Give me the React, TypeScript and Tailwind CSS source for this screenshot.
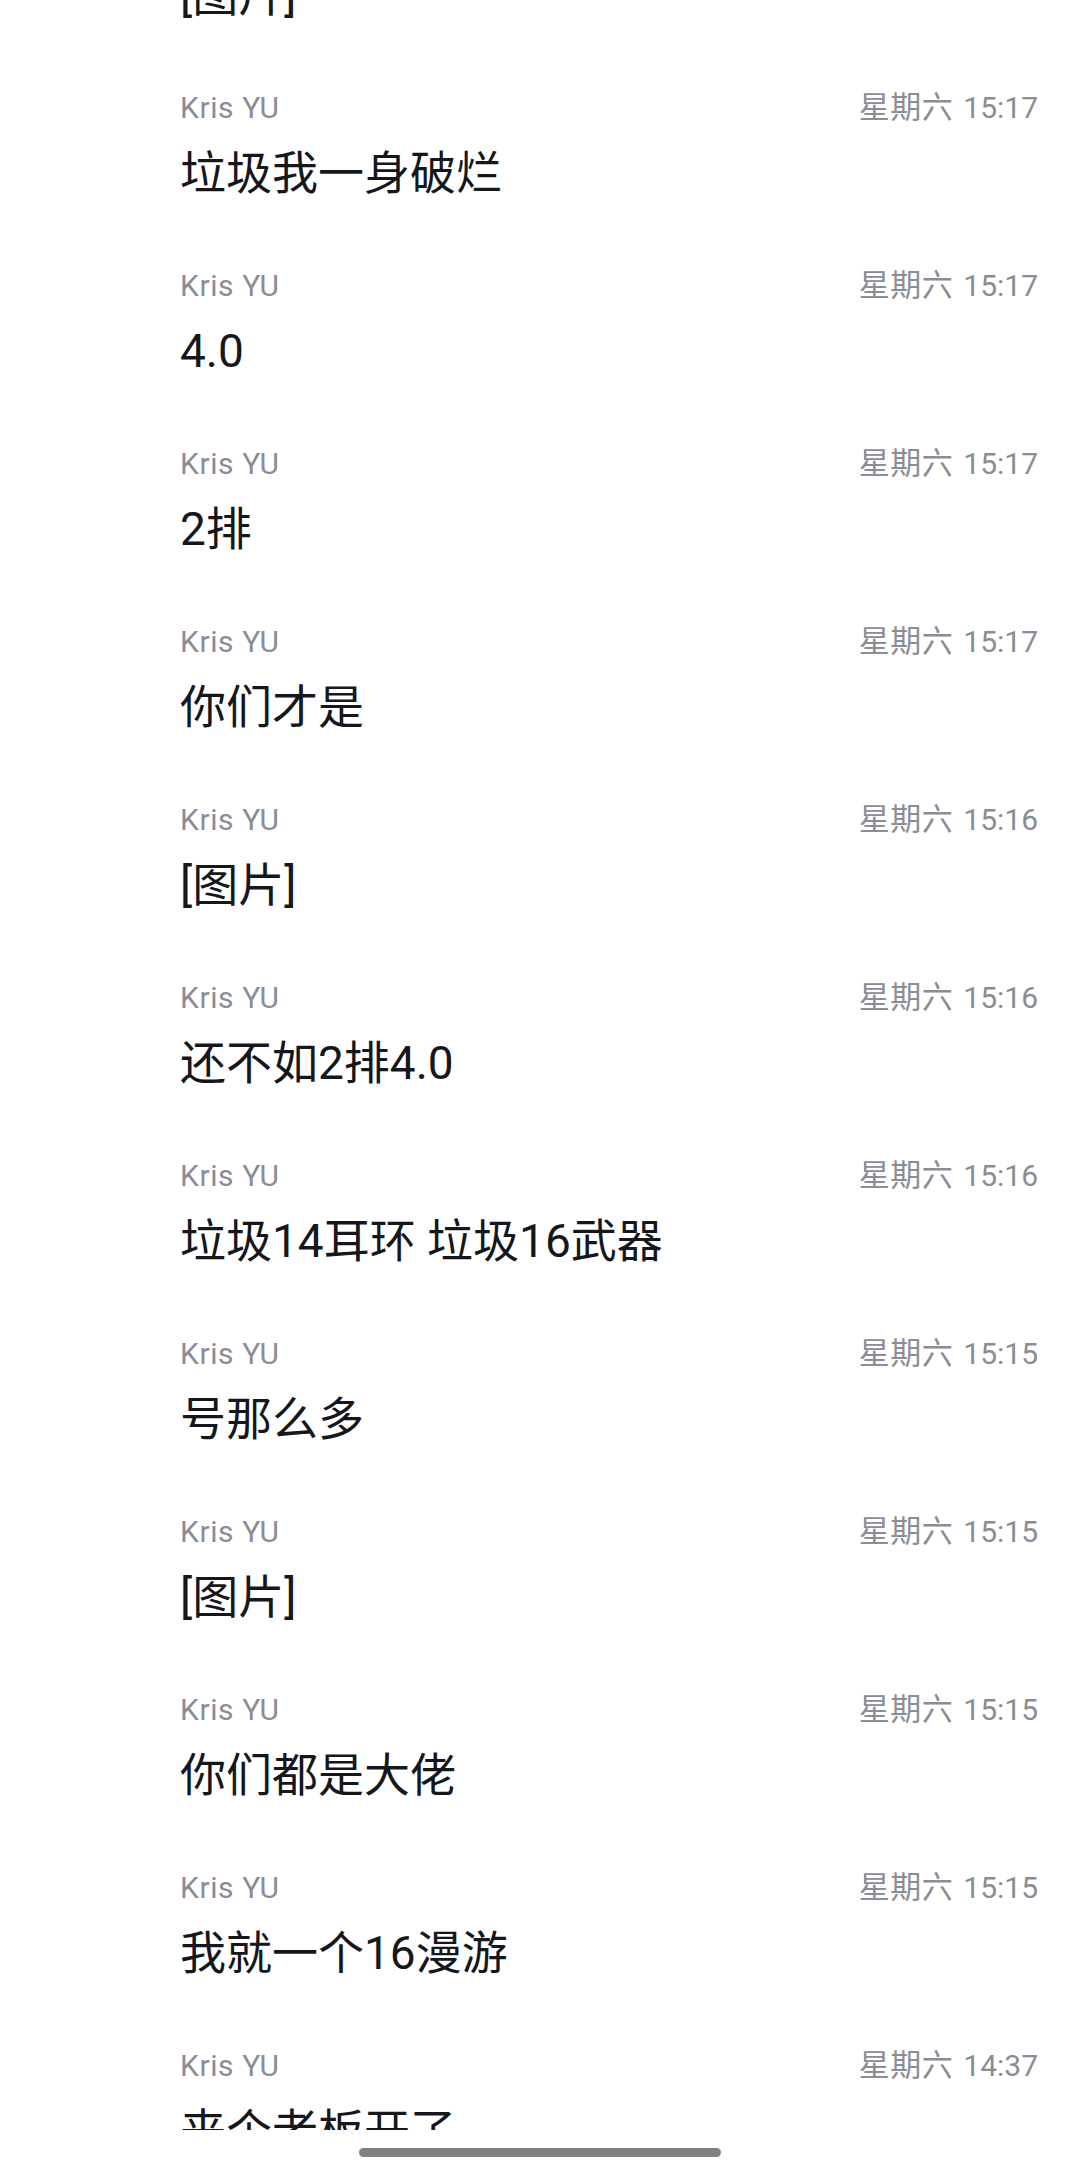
import React from 'react';

type Message = {
  id: number;
  day: string;
  clock: string;
  text: string;
};

const messages: Message[] = [
  { id: 0, day: '星期六', clock: '15:17', text: '[图片]' },
  { id: 1, day: '星期六', clock: '15:17', text: '垃圾我一身破烂' },
  { id: 2, day: '星期六', clock: '15:17', text: '4.0' },
  { id: 3, day: '星期六', clock: '15:17', text: '2排' },
  { id: 4, day: '星期六', clock: '15:17', text: '你们才是' },
  { id: 5, day: '星期六', clock: '15:16', text: '[图片]' },
  { id: 6, day: '星期六', clock: '15:16', text: '还不如2排4.0' },
  { id: 7, day: '星期六', clock: '15:16', text: '垃圾14耳环 垃圾16武器' },
  { id: 8, day: '星期六', clock: '15:15', text: '号那么多' },
  { id: 9, day: '星期六', clock: '15:15', text: '[图片]' },
  { id: 10, day: '星期六', clock: '15:15', text: '你们都是大佬' },
  { id: 11, day: '星期六', clock: '15:15', text: '我就一个16漫游' },
  { id: 12, day: '星期六', clock: '14:37', text: '来个老板开了' },
];

const MessageRow: React.FC<{ message: Message }> = ({ message }) => (
  <div className="flex flex-col h-[178px] pt-[40px] pl-[180px] pr-[42px] shrink-0">
    <div className="flex items-center justify-between text-[30px] leading-[40px] text-[#8a8d95]">
      <span className="tracking-[0.6px]">Kris YU</span>
      <span className="flex items-baseline">
        <span className="text-[31px] tracking-[0.5px]">{message.day}</span>
        <span className="ml-[10px]">{message.clock}</span>
      </span>
    </div>
    <div className="mt-[17px] text-[46px] leading-[56px] text-[#15171c] whitespace-nowrap">
      {message.text}
    </div>
  </div>
);

export default function App() {
  return (
    <div
      className="w-[1080px] h-[2178px] bg-white flex flex-col overflow-hidden"
      style={{ fontFamily: 'Roboto, "Noto Sans CJK SC", sans-serif' }}
    >
      {/* Search results */}
      <div className="h-[2130px] overflow-hidden shrink-0">
        <div className="flex flex-col -mt-[130px]">
          {messages.map(m => (
            <MessageRow key={m.id} message={m} />
          ))}
        </div>
      </div>

      {/* Gesture bar */}
      <div className="flex-1 flex justify-center pt-[18px]">
        <div className="w-[362px] h-[9px] rounded-full bg-[#808080]" />
      </div>
    </div>
  );
}
